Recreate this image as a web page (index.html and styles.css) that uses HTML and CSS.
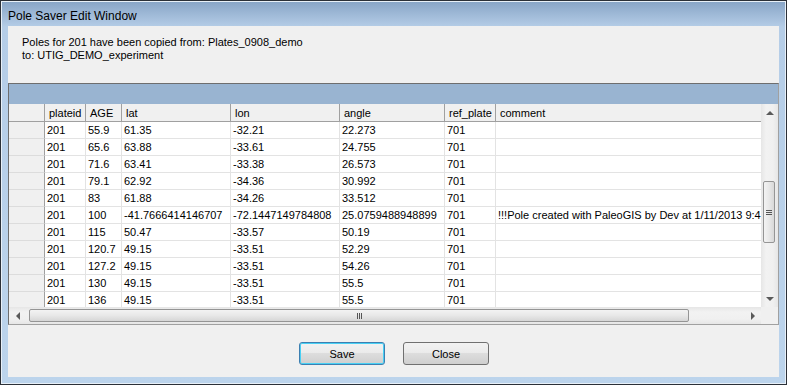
FILE: index.html
```html
<!DOCTYPE html>
<html lang="en">
<head>
  <meta charset="UTF-8">
  <title>Pole Saver Edit Window</title>
  <link rel="stylesheet" href="styles.css">
</head>
<body>
  <div class="window">
    <div class="titlebar">Pole Saver Edit Window</div>
    <div class="client">
      <div class="message">
        <div>Poles for 201 have been copied from: Plates_0908_demo</div>
        <div>to: UTIG_DEMO_experiment</div>
      </div>

      <div class="grid">
        <div class="caption"></div>
        <div class="grid-body">
          <div class="table">
            <div class="row header">
              <div class="cell rowhead"></div>
              <div class="cell">plateid</div>
              <div class="cell">AGE</div>
              <div class="cell">lat</div>
              <div class="cell">lon</div>
              <div class="cell">angle</div>
              <div class="cell">ref_plate</div>
              <div class="cell">comment</div>
            </div>
            <div class="rows">
              <div class="row"><div class="cell rowhead"></div><div class="cell">201</div><div class="cell">55.9</div><div class="cell">61.35</div><div class="cell">-32.21</div><div class="cell">22.273</div><div class="cell">701</div><div class="cell"></div></div>
              <div class="row"><div class="cell rowhead"></div><div class="cell">201</div><div class="cell">65.6</div><div class="cell">63.88</div><div class="cell">-33.61</div><div class="cell">24.755</div><div class="cell">701</div><div class="cell"></div></div>
              <div class="row"><div class="cell rowhead"></div><div class="cell">201</div><div class="cell">71.6</div><div class="cell">63.41</div><div class="cell">-33.38</div><div class="cell">26.573</div><div class="cell">701</div><div class="cell"></div></div>
              <div class="row"><div class="cell rowhead"></div><div class="cell">201</div><div class="cell">79.1</div><div class="cell">62.92</div><div class="cell">-34.36</div><div class="cell">30.992</div><div class="cell">701</div><div class="cell"></div></div>
              <div class="row"><div class="cell rowhead"></div><div class="cell">201</div><div class="cell">83</div><div class="cell">61.88</div><div class="cell">-34.26</div><div class="cell">33.512</div><div class="cell">701</div><div class="cell"></div></div>
              <div class="row"><div class="cell rowhead"></div><div class="cell">201</div><div class="cell">100</div><div class="cell">-41.7666414146707</div><div class="cell">-72.1447149784808</div><div class="cell">25.0759488948899</div><div class="cell">701</div><div class="cell">!!!Pole created with PaleoGIS by Dev at 1/11/2013 9:4</div></div>
              <div class="row"><div class="cell rowhead"></div><div class="cell">201</div><div class="cell">115</div><div class="cell">50.47</div><div class="cell">-33.57</div><div class="cell">50.19</div><div class="cell">701</div><div class="cell"></div></div>
              <div class="row"><div class="cell rowhead"></div><div class="cell">201</div><div class="cell">120.7</div><div class="cell">49.15</div><div class="cell">-33.51</div><div class="cell">52.29</div><div class="cell">701</div><div class="cell"></div></div>
              <div class="row"><div class="cell rowhead"></div><div class="cell">201</div><div class="cell">127.2</div><div class="cell">49.15</div><div class="cell">-33.51</div><div class="cell">54.26</div><div class="cell">701</div><div class="cell"></div></div>
              <div class="row"><div class="cell rowhead"></div><div class="cell">201</div><div class="cell">130</div><div class="cell">49.15</div><div class="cell">-33.51</div><div class="cell">55.5</div><div class="cell">701</div><div class="cell"></div></div>
              <div class="row"><div class="cell rowhead"></div><div class="cell">201</div><div class="cell">136</div><div class="cell">49.15</div><div class="cell">-33.51</div><div class="cell">55.5</div><div class="cell">701</div><div class="cell"></div></div>
            </div>
          </div>
          <div class="vscroll">
            <div class="arrow up"></div>
            <div class="vtrack">
              <div class="vthumb"><span class="grip"></span></div>
            </div>
            <div class="arrow down"></div>
          </div>
        </div>
        <div class="grid-foot">
          <div class="hscroll">
            <div class="arrow left"></div>
            <div class="htrack">
              <div class="hthumb"><span class="grip"></span></div>
            </div>
            <div class="arrow right"></div>
          </div>
          <div class="corner"></div>
        </div>
      </div>

      <div class="buttons">
        <button class="btn default">Save</button>
        <button class="btn">Close</button>
      </div>
    </div>
  </div>
</body>
</html>
```

FILE: styles.css
```css
html, body {
  margin: 0;
  padding: 0;
  width: 100%;
  height: 100%;
  background: #fff;
  overflow: hidden;
}
.window {
  width: 787px;
  height: 385px;
  box-sizing: border-box;
  border: 1px solid #2b3038;
  box-shadow: inset 0 0 0 1px #e8f0f8;
  background: linear-gradient(to bottom, #87a4c6 0px, #b5cde7 26px, #bcd4ec 100%);
  padding: 0 7px 7px 7px;
  display: flex;
  flex-direction: column;
  font-family: "Liberation Sans", Arial, sans-serif;
  font-size: 11px;
  color: #000;
}
.titlebar {
  height: 25px;
  line-height: 31px;
  font-size: 12px;
  color: #000;
}
.client {
  flex: 1;
  background: #f0f0f0;
  display: flex;
  flex-direction: column;
}
.message {
  height: 57px;
  box-sizing: border-box;
  padding: 10px 14px 0;
  line-height: 13px;
}
.grid {
  border: 1px solid #6e6e6e;
  border-right-color: #a0a0a0;
  border-bottom-color: #a0a0a0;
  display: flex;
  flex-direction: column;
}
.caption {
  height: 20px;
  background: #99b4d1;
}
.grid-body {
  display: flex;
}
.table {
  width: 752px;
  background: #fff;
}
.rows {
  height: 185px;
  overflow: hidden;
}
.row {
  display: grid;
  grid-template-columns: 36px 41px 36px 109px 109px 105px 51px 265px;
  height: 17px;
}
.cell {
  box-sizing: border-box;
  border-right: 1px solid #e3e3e3;
  border-bottom: 1px solid #e3e3e3;
  padding: 0 0 0 2px;
  line-height: 17px;
  white-space: nowrap;
  overflow: hidden;
}
.cell:last-child {
  border-right: none;
}
.cell.rowhead {
  background: #f0f0f0;
  border-right-color: #a0a0a0;
  border-bottom-color: #dcdcdc;
}
.header {
  height: 18px;
}
.header .cell {
  background: #f0f0f0;
  border-right-color: #a0a0a0;
  border-bottom-color: #a0a0a0;
  padding-left: 4px;
  line-height: 18px;
}
.header .cell:last-child {
  border-right: none;
}

/* scrollbars */
.vscroll {
  width: 17px;
  height: 203px;
  background: linear-gradient(to right, #e6e6e6, #f2f2f2 30%, #f0f0f0 70%, #e6e6e6);
  display: flex;
  flex-direction: column;
}
.vtrack {
  flex: 1;
  position: relative;
}
.vthumb {
  position: absolute;
  left: 2px;
  top: 60px;
  width: 12px;
  height: 62px;
  box-sizing: border-box;
  border: 1px solid #959595;
  border-radius: 2px;
  background: linear-gradient(to right, #f3f3f3, #e8e8e8 50%, #d8d8d8);
  display: flex;
  align-items: center;
  justify-content: center;
}
.vthumb .grip {
  width: 6px;
  height: 5px;
  border-top: 1px solid #555;
  border-bottom: 1px solid #555;
  box-sizing: border-box;
  background: linear-gradient(to bottom, transparent 1px, #555 1px, #555 2px, transparent 2px);
}
.grid-foot {
  display: flex;
  height: 17px;
}
.hscroll {
  width: 752px;
  background: linear-gradient(to bottom, #e6e6e6, #f2f2f2 30%, #f0f0f0 70%, #e6e6e6);
  display: flex;
}
.htrack {
  flex: 1;
  position: relative;
}
.hthumb {
  position: absolute;
  top: 2px;
  left: 3px;
  width: 660px;
  height: 13px;
  box-sizing: border-box;
  border: 1px solid #959595;
  border-radius: 2px;
  background: linear-gradient(to bottom, #f3f3f3, #e8e8e8 50%, #d6d6d6);
  display: flex;
  align-items: center;
  justify-content: center;
}
.hthumb .grip {
  width: 5px;
  height: 6px;
  border-left: 1px solid #555;
  border-right: 1px solid #555;
  box-sizing: border-box;
  background: linear-gradient(to right, transparent 1px, #555 1px, #555 2px, transparent 2px);
}
.corner {
  width: 17px;
  background: #f0f0f0;
}
.arrow {
  width: 17px;
  height: 17px;
  flex: none;
  display: flex;
  align-items: center;
  justify-content: center;
}
.arrow::before {
  content: "";
  width: 0;
  height: 0;
}
.arrow.up::before {
  border-left: 4px solid transparent;
  border-right: 4px solid transparent;
  border-bottom: 4px solid #5a5a5a;
}
.arrow.down::before {
  border-left: 4px solid transparent;
  border-right: 4px solid transparent;
  border-top: 4px solid #5a5a5a;
}
.arrow.left::before {
  border-top: 4px solid transparent;
  border-bottom: 4px solid transparent;
  border-right: 4px solid #5a5a5a;
}
.arrow.right::before {
  border-top: 4px solid transparent;
  border-bottom: 4px solid transparent;
  border-left: 4px solid #5a5a5a;
}

/* buttons */
.buttons {
  display: flex;
  justify-content: center;
  gap: 18px;
  padding-top: 17px;
  padding-left: 1px;
}
.btn {
  width: 86px;
  height: 23px;
  border: 1px solid #707070;
  border-radius: 3px;
  background: linear-gradient(to bottom, #f2f2f2 0%, #ebebeb 45%, #dddddd 50%, #cfcfcf 100%);
  font-family: "Liberation Sans", Arial, sans-serif;
  font-size: 11px;
  color: #000;
  padding: 0;
}
.btn.default {
  border-color: #3c7fb1;
  box-shadow: inset 0 0 0 1px #48d0f4;
}
```
